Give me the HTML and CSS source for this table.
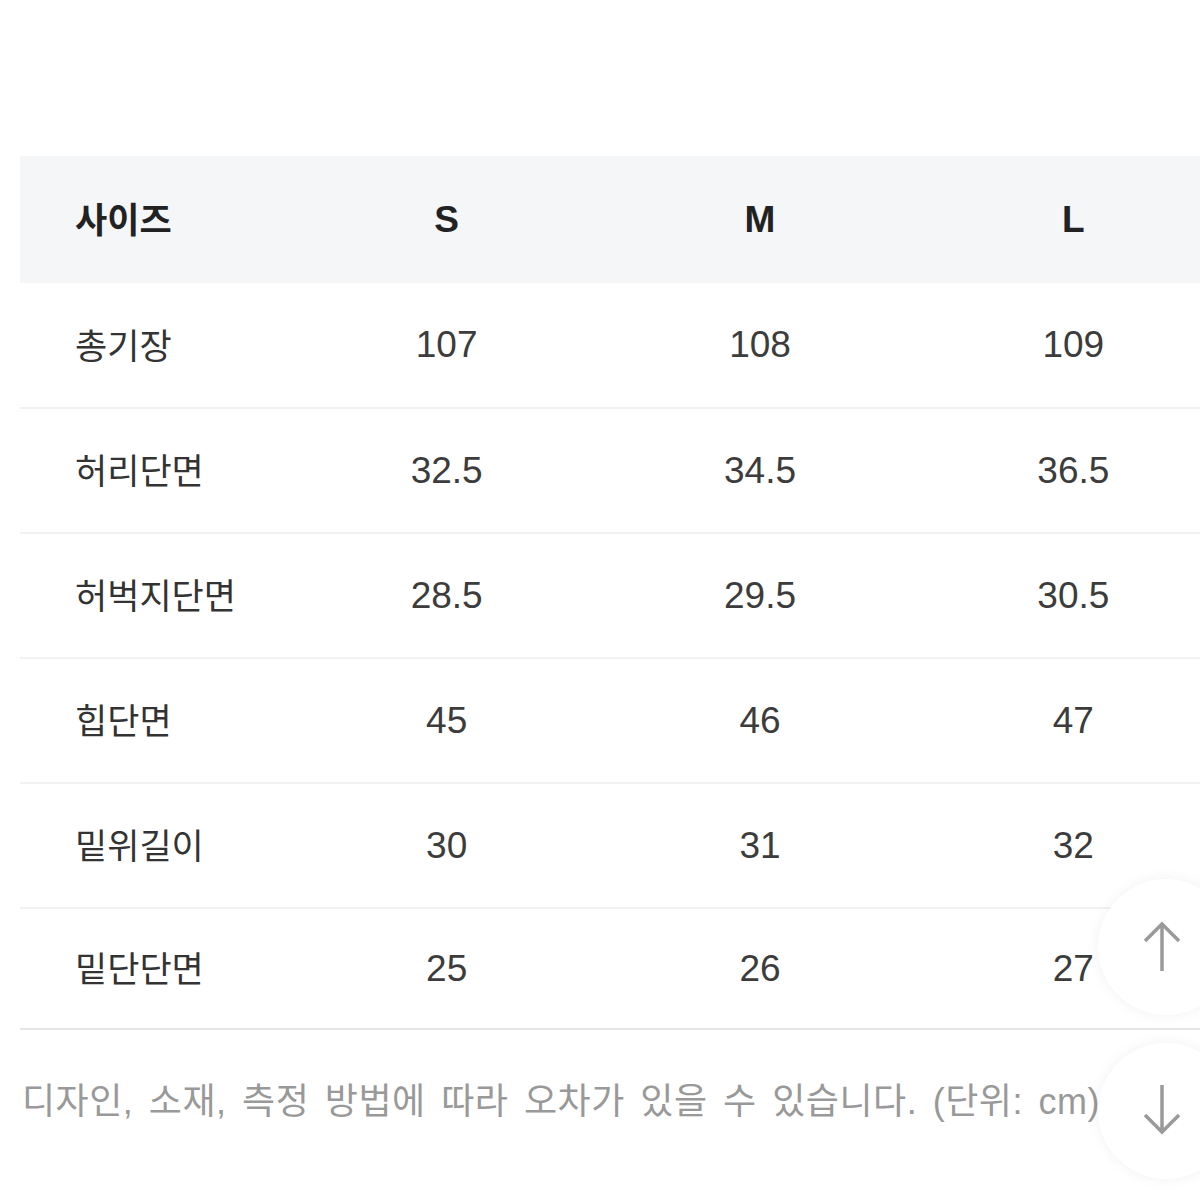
FILE: index.html
```html
<!DOCTYPE html>
<html lang="ko">
<head>
<meta charset="utf-8">
<link rel="stylesheet" href="styles.css">
</head>
<body>
<div class="page">
  <table class="size-table">
    <thead>
      <tr><th class="label">사이즈</th><th>S</th><th>M</th><th>L</th></tr>
    </thead>
    <tbody>
      <tr><td class="label">총기장</td><td>107</td><td>108</td><td>109</td></tr>
      <tr><td class="label">허리단면</td><td>32.5</td><td>34.5</td><td>36.5</td></tr>
      <tr><td class="label">허벅지단면</td><td>28.5</td><td>29.5</td><td>30.5</td></tr>
      <tr><td class="label">힙단면</td><td>45</td><td>46</td><td>47</td></tr>
      <tr><td class="label">밑위길이</td><td>30</td><td>31</td><td>32</td></tr>
      <tr class="last"><td class="label">밑단단면</td><td>25</td><td>26</td><td>27</td></tr>
    </tbody>
  </table>
  <p class="note">디자인, 소재, 측정 방법에 따라 오차가 있을 수 있습니다. (단위: cm)</p>
</div>
<div class="scroll-btns">
  <button class="scroll-btn up" aria-label="위로">
    <svg width="40" height="52" viewBox="0 0 40 52"><path d="M20 50 V3 M3 20 L20 3 L37 20" fill="none" stroke="#9a9a9a" stroke-width="3.5"/></svg>
  </button>
  <button class="scroll-btn down" aria-label="아래로">
    <svg width="40" height="52" viewBox="0 0 40 52"><path d="M20 2 V49 M3 32 L20 49 L37 32" fill="none" stroke="#9a9a9a" stroke-width="3.5"/></svg>
  </button>
</div>
</body>
</html>
```

FILE: styles.css
```css
html, body {
  margin: 0;
  padding: 0;
  background: #fff;
  overflow: hidden;
  width: 1200px;
  height: 1200px;
}
body {
  font-family: "Liberation Sans", "Noto Sans CJK KR", sans-serif;
  color: #333;
}
.page {
  padding: 156px 0 0 20px;
}
.size-table {
  border-collapse: collapse;
  width: 1210px;
  table-layout: fixed;
}
.size-table th, .size-table td {
  text-align: center;
  font-size: 37px;
  padding: 0;
}
.size-table th.label, .size-table td.label {
  text-align: left;
  padding-left: 55px;
  width: 215px;
  font-family: "Noto Sans CJK KR", sans-serif;
  font-size: 35px;
}
.size-table thead tr {
  background: #f4f6f8;
  height: 127px;
}
.size-table th {
  font-weight: 700;
  color: #222;
}
.size-table th.label {
  font-weight: 700;
  padding-bottom: 4px;
}
.size-table tbody tr {
  height: 125px;
  border-bottom: 2px solid #f2f2f2;
}
.size-table tbody tr.last {
  height: 121px;
  border-bottom: 2px solid #e6e6e6;
}
.size-table td {
  font-weight: 400;
  color: #3c3c3c;
}
.size-table td.label {
  padding-bottom: 4px;
  color: #333;
}
.note {
  margin: 42px 0 0 2px;
  font-size: 36px;
  color: #999;
  letter-spacing: 0.5px;
  word-spacing: 5px;
  white-space: nowrap;
}
.scroll-btns {
  position: absolute;
  left: 1098px;
  top: 879px;
  display: flex;
  flex-direction: column;
  gap: 28px;
}
.scroll-btn {
  width: 136px;
  height: 136px;
  border-radius: 50%;
  background: #fff;
  border: none;
  box-shadow: 0 0 14px rgba(0,0,0,0.06);
  display: flex;
  align-items: flex-start;
  justify-content: flex-start;
  padding: 42px 0 0 44px;
  box-sizing: border-box;
}
.scroll-btn.down {
  padding-top: 40px;
}
```
